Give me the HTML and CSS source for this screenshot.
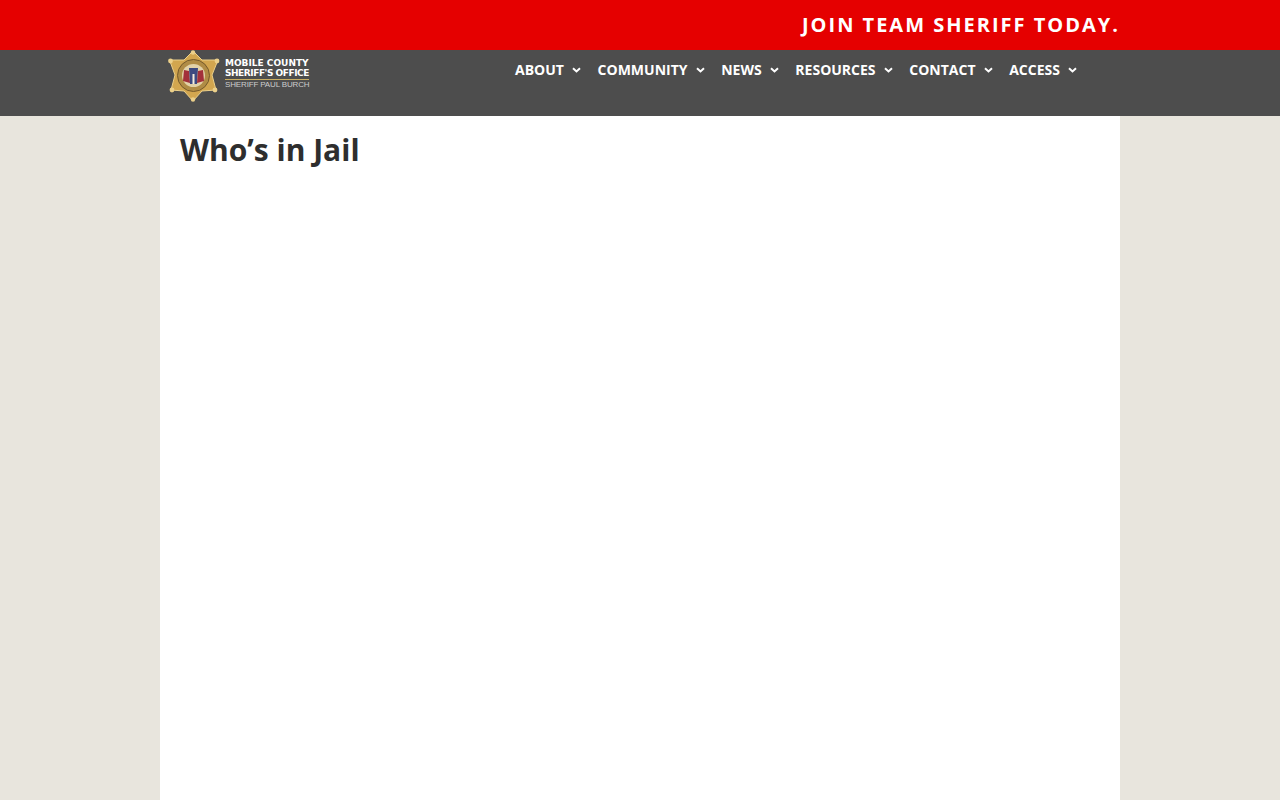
FILE: index.html
```html
<!DOCTYPE html>
<html>
<head>
    <title>Who's in Jail</title>
    <link rel="stylesheet" href="styles.css">
</head>
<body>
    <div class="top-bar">
        <div class="top-bar-inner">
            <a class="join-link">JOIN TEAM SHERIFF TODAY.</a>
        </div>
    </div>
    <header class="site-header">
        <div class="header-inner">
            <a class="logo">
                <svg class="logo-star" width="52" height="52" viewBox="0 0 52 52">
                    <polygon points="25,1 34,10 50,10 44,25 48,40 34,41 25,51 16,41 3,40 7,25 1.500,10 16,10" fill="#d2a64f" stroke="#ecd08a" stroke-width="1"/>
                    <circle cx="25" cy="2.500" r="2.200" fill="#ecd08a"/>
                    <circle cx="49" cy="11" r="2.400" fill="#ecd08a"/>
                    <circle cx="47" cy="40" r="2.400" fill="#ecd08a"/>
                    <circle cx="25" cy="49.500" r="2.200" fill="#ecd08a"/>
                    <circle cx="4" cy="40" r="2.400" fill="#ecd08a"/>
                    <circle cx="2.500" cy="11" r="2.400" fill="#ecd08a"/>
                    <circle cx="25.500" cy="25.500" r="16" fill="#b08c45" stroke="#75592a" stroke-width="1"/>
                    <circle cx="25.500" cy="25.500" r="11.500" fill="#e2d2a8"/>
                    <path d="M15 31 L16 20 L21 21 L22 33 Z" fill="#a3303a"/>
                    <path d="M22 34 L21 18 L30 18 L29 34 Z" fill="#3d4a80"/>
                    <path d="M24.500 34 L24.500 24 L26.500 24 L26.500 34 Z" fill="#f4ecdc"/>
                    <path d="M29 33 L30 21 L35 20 L36 31 Z" fill="#a3303a"/>
                </svg>
                <span class="logo-text">
                    <span class="logo-line">MOBILE COUNTY</span>
                    <span class="logo-line logo-line-rule">SHERIFF'S OFFICE</span>
                    <span class="logo-line logo-line-thin">SHERIFF PAUL BURCH</span>
                </span>
            </a>
            <nav class="main-nav">
                <a class="nav-item">ABOUT<svg class="chevron" width="9" height="6" viewBox="0 0 9 6"><path d="M1 1.200 L4.500 4.400 L8 1.200" /></svg></a>
                <a class="nav-item">COMMUNITY<svg class="chevron" width="9" height="6" viewBox="0 0 9 6"><path d="M1 1.200 L4.500 4.400 L8 1.200" /></svg></a>
                <a class="nav-item">NEWS<svg class="chevron" width="9" height="6" viewBox="0 0 9 6"><path d="M1 1.200 L4.500 4.400 L8 1.200" /></svg></a>
                <a class="nav-item">RESOURCES<svg class="chevron" width="9" height="6" viewBox="0 0 9 6"><path d="M1 1.200 L4.500 4.400 L8 1.200" /></svg></a>
                <a class="nav-item">CONTACT<svg class="chevron" width="9" height="6" viewBox="0 0 9 6"><path d="M1 1.200 L4.500 4.400 L8 1.200" /></svg></a>
                <a class="nav-item">ACCESS<svg class="chevron" width="9" height="6" viewBox="0 0 9 6"><path d="M1 1.200 L4.500 4.400 L8 1.200" /></svg></a>
            </nav>
        </div>
    </header>
    <main class="page-content">
        <h1 class="page-title">Who’s in Jail</h1>
    </main>
</body>
</html>
```

FILE: styles.css
```css
html, body {
    height: 100%;
}

body {
    margin: 0;
    font-family: "Open Sans", Arial, sans-serif;
    background-color: #e8e5dd;
    display: flex;
    flex-direction: column;
    overflow: hidden;
}

.top-bar {
    background-color: #e50000;
    height: 50px;
    flex-shrink: 0;
}

.top-bar-inner {
    width: 960px;
    height: 48px;
    margin: 0 auto;
    display: flex;
    align-items: center;
    justify-content: flex-end;
}

.join-link {
    color: white;
    font-size: 20px;
    font-weight: 700;
    letter-spacing: 2px;
}

.site-header {
    background-color: #4d4d4d;
    height: 66px;
    flex-shrink: 0;
}

.header-inner {
    width: 960px;
    margin: 0 auto;
    display: flex;
    align-items: flex-start;
}

/* Logo */
.logo {
    display: flex;
    align-items: flex-start;
    margin-left: 8px;
    width: 347px;
}

.logo-star {
    display: block;
    flex-shrink: 0;
}

.logo-text {
    display: flex;
    flex-direction: column;
    width: 84px;
    margin: 8px 0 0 5px;
    color: white;
    font-family: "DejaVu Sans", Arial, sans-serif;
    font-weight: 700;
}

.logo-line {
    font-size: 9px;
    line-height: 10px;
    white-space: nowrap;
}

.logo-line-rule {
    border-bottom: 1px solid #c9ae62;
    letter-spacing: -0.45px;
    line-height: 10px;
    padding-bottom: 1px;
}

.logo-line-thin {
    font-family: "Liberation Sans", Arial, sans-serif;
    font-weight: 400;
    font-size: 8px;
    letter-spacing: -0.15px;
    line-height: 10px;
    color: #cccccc;
}

/* Nav */
.main-nav {
    display: flex;
    gap: 16.700px;
    padding-top: 10px;
}

.nav-item {
    color: white;
    font-size: 14px;
    font-weight: 700;
    line-height: 20px;
    display: flex;
    align-items: center;
}

.chevron {
    margin-left: 8px;
}

.chevron path {
    fill: none;
    stroke: white;
    stroke-width: 2;
}

.page-content {
    width: 920px;
    margin: 0 auto;
    padding: 0 20px;
    background-color: white;
    flex: 1;
}

.page-title {
    margin: 12px 0 0;
    color: #2e2e2e;
    font-size: 30px;
    font-weight: 700;
    line-height: 44px;
}
```
